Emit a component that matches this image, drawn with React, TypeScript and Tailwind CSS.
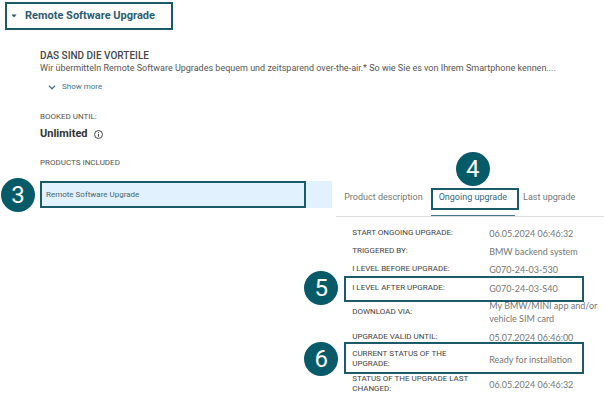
import { useState, type ReactNode } from "react";
import clsx from "clsx";

type DetailRow = {
  label: string;
  value: string;
  height: string;
  step?: number;
  frame?: string;
};

const TABS = ["Product description", "Ongoing upgrade", "Last upgrade"];

const ROWS: DetailRow[] = [
  { label: "START ONGOING UPGRADE:", value: "06.05.2024 06:46:32", height: "h-[18px]" },
  { label: "TRIGGERED BY:", value: "BMW backend system", height: "h-[18px]" },
  { label: "I LEVEL BEFORE UPGRADE:", value: "G070-24-03-530", height: "h-[18px]" },
  {
    label: "I LEVEL AFTER UPGRADE:",
    value: "G070-24-03-S40",
    height: "h-5",
    step: 5,
    frame: "-top-0.5 -bottom-1",
  },
  { label: "DOWNLOAD VIA:", value: "My BMW/MINI app and/or vehicle SIM card", height: "h-7" },
  { label: "UPGRADE VALID UNTIL:", value: "05.07.2024 06:46:00", height: "h-[22px]" },
  {
    label: "CURRENT STATUS OF THE UPGRADE:",
    value: "Ready for installation",
    height: "h-[22px]",
    step: 6,
    frame: "-top-1.5 -bottom-1",
  },
  { label: "STATUS OF THE UPGRADE LAST CHANGED:", value: "06.05.2024 06:46:32", height: "h-7" },
];

function Badge({ children, className }: { children: ReactNode; className: string }) {
  return (
    <span
      className={clsx(
        "absolute flex size-[34px] items-center justify-center rounded-full bg-[#075a68] text-[24px] leading-none font-normal text-white",
        className,
      )}
    >
      {children}
    </span>
  );
}

export default function App() {
  const [tab, setTab] = useState("Ongoing upgrade");

  return (
    <main className="min-h-screen bg-white pt-0.5 font-['Roboto',sans-serif] text-[8px] text-[#555]">
      <button
        type="button"
        className="ml-[5px] flex h-7 items-center gap-2 border-2 border-[#1b5a68] pr-4 pl-1 text-[11px] font-bold text-[#2c5c70]"
      >
        <svg viewBox="0 0 8 5" className="h-[4px] w-[6px]" fill="currentColor" aria-hidden="true">
          <path d="M0.5 0.5h7L4 4.5z" />
        </svg>
        Remote Software Upgrade
      </button>

      <section className="pt-[19px] pl-10">
        <div className="leading-[13px]">
          <h2 className="text-[10px] font-medium text-[#484848]">DAS SIND DIE VORTEILE</h2>
          <p className="text-[9px]">
            Wir übermitteln Remote Software Upgrades bequem und zeitsparend over-the-air.* So wie Sie es von Ihrem
            Smartphone kennen....
          </p>
        </div>
        <button type="button" className="mt-1 ml-2 flex h-4 items-center gap-1.5 text-[#467889]">
          <svg viewBox="0 0 8 5" className="h-[5px] w-2" fill="none" stroke="currentColor" strokeWidth="1.3" aria-hidden="true">
            <path d="M1 0.8l3 3 3-3" />
          </svg>
          Show more
        </button>

        <dl className="mt-4">
          <dt className="leading-3">BOOKED UNTIL:</dt>
          <dd className="mt-1 flex items-center gap-1.5 text-[11px] leading-[14px] font-bold text-[#333]">
            Unlimited
            <svg viewBox="0 0 10 10" className="size-[9px]" fill="none" stroke="currentColor" aria-label="Info" role="img">
              <circle cx="5" cy="5" r="4.4" />
              <path d="M5 4.3v3.2M5 2.4v1.1" />
            </svg>
          </dd>
        </dl>
        <h3 className="mt-4 leading-3">PRODUCTS INCLUDED</h3>
      </section>

      <div className="mt-3 flex items-start">
        <div className="relative w-[55%] shrink-0 pl-10">
          <button type="button" className="flex h-[27px] w-full bg-[#e1f2fe] pr-[26px] text-left text-[#4a6470]">
            <span className="flex h-full w-full items-center border-2 border-[#1b5a68] pl-1">Remote Software Upgrade</span>
          </button>
          <Badge className="-top-[3px] left-px">3</Badge>
        </div>

        <section className="ml-1 min-w-0 flex-1">
          <div
            role="tablist"
            className="flex h-9 items-center border-b border-[#dedede] text-[9px] whitespace-nowrap"
          >
            {TABS.map((name) => {
              const active = name === tab;
              return (
                <button
                  key={name}
                  type="button"
                  role="tab"
                  aria-selected={active}
                  onClick={() => setTab(name)}
                  className={clsx(
                    "relative h-full border-b px-2",
                    active ? "border-[#47788a] text-[#33697c]" : "border-transparent text-[#777]",
                  )}
                >
                  {name}
                  {name === "Ongoing upgrade" && (
                    <>
                      <span className="absolute top-[7px] -right-1 left-0 h-[22px] border-2 border-[#1b5a68]" />
                      <Badge className="-top-[29px] left-1/2 -translate-x-1/2">4</Badge>
                    </>
                  )}
                </button>
              );
            })}
          </div>

          <div className="pt-[7px] pl-4">
            <table className="w-full table-fixed border-collapse">
              <tbody>
                {ROWS.map((row) => (
                  <tr key={row.label} className={clsx("relative", row.height)}>
                    <th scope="row" className="w-[137px] p-0 pr-4 text-left align-middle leading-[10px] font-normal text-[#444]">
                      {row.label}
                      {row.step && (
                        <>
                          <span className={clsx("absolute right-5 -left-2 border-2 border-[#1b5a68]", row.frame)} />
                          <Badge className="top-1/2 -left-12 -translate-y-1/2">{row.step}</Badge>
                        </>
                      )}
                    </th>
                    <td className="p-0 align-middle font-['Lato',sans-serif] text-[9px] leading-[13px] text-[#777]">{row.value}</td>
                  </tr>
                ))}
              </tbody>
            </table>
          </div>
        </section>
      </div>
    </main>
  );
}
